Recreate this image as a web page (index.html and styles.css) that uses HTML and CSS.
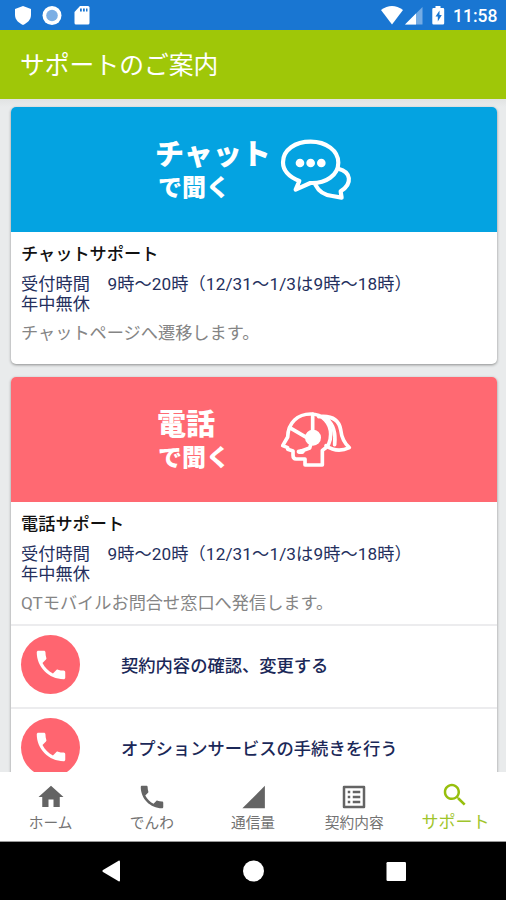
FILE: index.html
```
<!DOCTYPE html>
<html lang="ja">
<head>
<meta charset="utf-8">
<title>サポートのご案内</title>
<link rel="stylesheet" href="styles.css">
</head>
<body>
<svg class="defs" width="0" height="0">
  <symbol id="phone" viewBox="0 0 24 24"><path d="M6.62 10.79c1.44 2.83 3.76 5.14 6.59 6.59l2.2-2.2c.27-.27.67-.36 1.02-.24 1.12.37 2.33.57 3.57.57.55 0 1 .45 1 1V20c0 .55-.45 1-1 1C10.61 21 3 13.39 3 4c0-.55.45-1 1-1h3.5c.55 0 1 .45 1 1 0 1.25.2 2.45.57 3.57.11.35.03.74-.25 1.02z"/></symbol>
</svg>
<div class="screen">
  <header class="status">
    <svg class="status-left" viewBox="0 0 90 30">
      <path d="M23 6l8 3v6c0 5-4 8-8 10-4-2-8-5-8-10V9z"/>
      <circle cx="52" cy="15.500" r="9.500"/><circle class="dot" cx="52" cy="15.500" r="5.800"/>
      <path d="M80 6h8q1.500 0 1.500 1.500v15.500q0 1.500-1.500 1.500h-12q-1.500 0-1.500-1.500V12z"/>
      <path class="pins" d="M80 8.500h1.800v3H80zM83 8.500h1.800v3H83zM86 8.500h1.500v3H86z"/>
    </svg>
    <svg class="status-right" viewBox="380 0 66 30">
      <path d="M381 10q11-8 22 0l-11 14.500z"/>
      <path class="faint" d="M422.500 7v17.500H405z"/><path d="M416 13.500v11h-11z"/>
      <path d="M435.500 6h5v2h2.500q1.200 0 1.200 1.200v14q0 1.300-1.200 1.300h-9.500q-1.200 0-1.200-1.300v-14q0-1.200 1.200-1.200h2z"/>
      <path class="bolt" d="M439.500 10.500l-4 6h2.300v5l4-6.500h-2.300z"/>
    </svg>
    <span class="clock">11:58</span>
  </header>
  <h1 class="appbar">サポートのご案内</h1>
  <main class="content">
    <section class="card chat">
      <div class="banner">
        <div class="banner-text"><strong>チャット</strong><span>で聞く</span></div>
        <svg class="chat-icon" viewBox="420 50 220 195">
          <path d="M478 182C443 168 429 148 429 126C429 88 466 64 512 64C559 64 595 91 595 127C595 164 558 190 511 188L467 208Z"/>
          <path d="M595 145C633 154 639 190 602 213L605 232L577 227C554 225 535 211 526 193"/>
          <g class="solid"><circle cx="480" cy="128" r="13"/><circle cx="512" cy="128" r="13"/><circle cx="544" cy="128" r="13"/></g>
        </svg>
      </div>
      <div class="info">
        <h2>チャットサポート</h2>
        <p class="hours">受付時間　9時〜20時（12/31〜1/3は9時〜18時）<br>年中無休</p>
        <p class="note">チャットページへ遷移します。</p>
      </div>
    </section>
    <section class="card tel">
      <div class="banner">
        <div class="banner-text"><strong>電話</strong><span>で聞く</span></div>
        <svg class="tel-icon" viewBox="420 60 215 175">
          <path d="M547 225H495V207H468Q459 207 459 196V183L443 178V173L428 167L443 141C444 97 474 72 512 72C548 72 572 99 572 133C572 158 562 174 547 181Z"/>
          <path d="M536 80C576 76 597 91 602 119Q606 154 628 173Q591 190 558 167M562 88C579 103 588 126 584 164"/>
          <path d="M518 72V125M449 113L499 142M518 143L509 174L482 184"/>
          <circle class="solid" cx="519" cy="143" r="24"/><ellipse class="solid" cx="482" cy="185" rx="12" ry="7"/>
        </svg>
      </div>
      <div class="info">
        <h2>電話サポート</h2>
        <p class="hours">受付時間　9時〜20時（12/31〜1/3は9時〜18時）<br>年中無休</p>
        <p class="note">QTモバイルお問合せ窓口へ発信します。</p>
      </div>
      <a class="row"><span class="call"><svg><use href="#phone"/></svg></span>契約内容の確認、変更する</a>
      <a class="row"><span class="call"><svg><use href="#phone"/></svg></span>オプションサービスの手続きを行う</a>
    </section>
  </main>
  <nav class="tabs">
    <a class="tab"><svg viewBox="0 0 24 24"><path d="M10 20v-6h4v6h5v-8h3L12 3 2 12h3v8z"/></svg>ホーム</a>
    <a class="tab"><svg><use href="#phone"/></svg>でんわ</a>
    <a class="tab"><svg viewBox="0 0 24 24"><path d="M3.500 21h18V3z"/></svg>通信量</a>
    <a class="tab"><svg viewBox="0 0 24 24"><path fill-rule="evenodd" d="M4 3h16q1 0 1 1v16q0 1-1 1H4q-1 0-1-1V4q0-1 1-1zM5 5v14h14V5zM7 7h2v2H7zM11 7h6v2h-6zM7 11h2v2H7zM11 11h6v2h-6zM7 15h2v2H7zM11 15h6v2h-6z"/></svg>契約内容</a>
    <a class="tab active"><svg viewBox="0 0 24 24"><path d="M15.500 14h-.79l-.28-.27C15.410 12.590 16 11.110 16 9.500 16 5.910 13.090 3 9.500 3S3 5.910 3 9.500 5.910 16 9.500 16c1.610 0 3.090-.59 4.230-1.570l.27.28v.79l5 4.990L20.490 19l-4.990-5zm-6 0C7.010 14 5 11.990 5 9.500S7.010 5 9.500 5 14 7.010 14 9.500 11.990 14 9.500 14z"/></svg>サポート</a>
  </nav>
  <footer class="system">
    <svg viewBox="0 0 506 58"><path d="M103 28l16-9.500q1 0 1 1v19q0 1-1 1l-16-9.500q-1.500-1 0-2z"/><circle cx="253.500" cy="29" r="10.500"/><rect x="386.500" y="20" width="19.500" height="19" rx="1.200"/></svg>
  </footer>
</div>
</body>
</html>
```

FILE: styles.css
```
* { box-sizing: border-box; margin: 0; padding: 0; }
body {
  font-family: Roboto, "Noto Sans CJK JP", sans-serif;
  background: #000;
}
.defs { display: block; }
.screen {
  width: 506px;
  height: 900px;
  display: flex;
  flex-direction: column;
  overflow: hidden;
}
.status {
  height: 30px;
  flex: none;
  display: flex;
  align-items: center;
  background: #1976d2;
  color: #fff;
  fill: #fff;
}
.status-left { width: 90px; height: 30px; }
.status-right { width: 66px; height: 30px; margin-left: 290px; }
.dot { fill: #7baee4; }
.pins, .bolt { fill: #1976d2; }
.faint { opacity: .4; }
.clock { margin-left: 7px; font-size: 17.500px; font-weight: 500; line-height: 30px; padding-top: 2px; }
.appbar {
  height: 69px;
  flex: none;
  padding: 1px 0 0 20px;
  background: #9fc708;
  color: #fff;
  font-size: 24.800px;
  font-weight: 400;
  line-height: 70px;
}
.content {
  flex: 1;
  min-height: 0;
  overflow: hidden;
  padding: 8px 9px 0 11px;
  background: linear-gradient(#e1e3e3, #e9ebec 8px);
}
.card {
  background: #fff;
  border-radius: 5px;
  overflow: hidden;
  box-shadow: 0 1px 3px rgba(0, 0, 0, .4);
}
.chat { height: 257px; margin-bottom: 13px; }
.banner {
  height: 125px;
  display: flex;
  padding-left: 146px;
  color: #fff;
  fill: none;
  stroke: #fff;
  stroke-width: 12.500;
  stroke-linejoin: round;
  stroke-linecap: round;
}
.chat .banner { background: #04a3e1; }
.tel .banner { background: #ff6972; }
.tel-icon { stroke-width: 11; }
.banner-text {
  width: 123px;
  flex: none;
  padding-top: 30px;
  font-weight: 900;
  white-space: nowrap;
}
.banner-text strong { display: block; font-size: 29px; line-height: 36px; font-weight: 900; }
.chat strong { margin-left: -2px; }
.banner-text span { display: block; font-size: 24px; line-height: 31px; padding-left: 1px; }
.chat-icon { width: 73.300px; height: 65px; margin-top: 29.700px; }
.tel-icon { width: 71.700px; height: 58.300px; margin-top: 33px; }
.solid { fill: #fff; stroke: none; }
.info { height: 122px; padding: 12px 10px 0; font-size: 17.200px; line-height: 20px; }
.info h2 { font-size: 17.200px; font-weight: 500; color: #111; margin-bottom: 10px; }
.hours { color: #24305e; margin-bottom: 9px; letter-spacing: .1px; }
.note { color: #858585; }
.row {
  height: 82.500px;
  display: flex;
  align-items: center;
  padding: 0 0 3px 10px;
  border-top: 2px solid #ececee;
  color: #1b2858;
  font-size: 17.300px;
  font-weight: 500;
}
.call {
  width: 59px;
  height: 59px;
  margin-right: 41px;
  border-radius: 50%;
  display: grid;
  place-items: center;
  background: #ff6570;
}
.call svg { width: 38px; height: 38px; fill: #fff; }
.tabs {
  height: 70px;
  flex: none;
  display: grid;
  grid-template-columns: repeat(5, 1fr);
  background: #fff;
  border-bottom: 1px solid #999;
}
.tab {
  display: flex;
  flex-direction: column;
  align-items: center;
  padding-top: 10px;
  color: #737373;
  fill: #646464;
  font-size: 14.700px;
  line-height: 22px;
  white-space: nowrap;
}
.tab svg { width: 30px; height: 30px; }
.active { padding-top: 8px; color: #9fc52c; fill: #97bf0d; font-size: 17px; line-height: 25px; }
.system { height: 58px; flex: none; background: #000; fill: #fff; }
.system svg { display: block; width: 506px; height: 58px; }
```
